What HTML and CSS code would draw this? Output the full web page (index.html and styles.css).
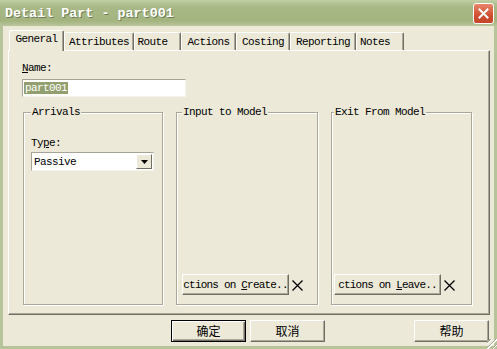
FILE: index.html
```html
<!DOCTYPE html>
<html lang="en">
  <head>
    <meta charset="UTF-8" />
    <title>Detail Part - part001</title>
    <link rel="stylesheet" href="styles.css">
  </head>
  <body>
    <div class="window">
      <div class="titlebar">
        <span class="title">Detail Part - part001</span>
        <span class="close">
          <svg width="11" height="11" viewBox="0 0 11 11"><path d="M1.5 1.5L9.5 9.5M9.5 1.5L1.5 9.5" stroke="#fff" stroke-width="2" stroke-linecap="square"/></svg>
        </span>
      </div>
      <div class="client">
        <div class="tabs">
          <span class="tab tab-general active">General</span>
          <span class="tab tab-attributes">Attributes</span>
          <span class="tab tab-route">Route</span>
          <span class="tab tab-actions">Actions</span>
          <span class="tab tab-costing">Costing</span>
          <span class="tab tab-reporting">Reporting</span>
          <span class="tab tab-notes">Notes</span>
        </div>
        <div class="panel">
          <div class="lbl"><u>N</u>ame:</div>
          <div class="textbox"><span class="sel">part001</span></div>
          <div class="groups">
            <fieldset class="group group-arrivals">
              <legend>Arrivals</legend>
              <div class="lbl type-lbl">Ty<u>p</u>e:</div>
              <div class="combo">
                <span class="combo-text">Passive</span>
                <span class="combo-btn">
                  <svg width="7" height="4" viewBox="0 0 7 4"><polygon points="0,0 7,0 3.5,4" fill="#000"/></svg>
                </span>
              </div>
            </fieldset>
            <fieldset class="group group-input">
              <legend>Input to Model</legend>
              <div class="action-row">
                <button class="btn action-btn">ctions on <u>C</u>reate..</button>
                <svg class="xmark" width="13" height="13" viewBox="0 0 13 13"><path d="M1.5 1.5L11.5 11.5M11.5 1.5L1.5 11.5" stroke="#000" stroke-width="1.3"/></svg>
              </div>
            </fieldset>
            <fieldset class="group group-exit">
              <legend>Exit From Model</legend>
              <div class="action-row">
                <button class="btn action-btn">ctions on <u>L</u>eave..</button>
                <svg class="xmark" width="13" height="13" viewBox="0 0 13 13"><path d="M1.5 1.5L11.5 11.5M11.5 1.5L1.5 11.5" stroke="#000" stroke-width="1.3"/></svg>
              </div>
            </fieldset>
          </div>
        </div>
        <div class="footer">
          <button class="btn cjk default">确定</button>
          <button class="btn cjk">取消</button>
          <button class="btn cjk help">帮助</button>
        </div>
        <span class="grip"></span>
      </div>
    </div>
  </body>
</html>
```

FILE: styles.css
```css
* {
  box-sizing: border-box;
}

body {
  margin: 0;
  background-color: #ece9d8;
  font-family: "Liberation Mono", "DejaVu Sans Mono", monospace;
  font-size: 11px;
  letter-spacing: -0.6px;
  color: #000;
}

.window {
  width: 497px;
  height: 349px;
  display: flex;
  flex-direction: column;
  background-color: #b7c49a;
}

/* Title bar */
.titlebar {
  height: 26px;
  display: flex;
  align-items: center;
  justify-content: space-between;
  padding: 0 3px 0 5px;
  background: linear-gradient(#c2cea4, #a9b986 25%, #a4b47f 80%, #b9c69c);
}

.title {
  font-size: 13.4px;
  font-weight: bold;
  letter-spacing: 0;
  color: #fff;
  text-shadow: 1px 1px 0 #6f7d52;
}

.close {
  width: 21px;
  height: 21px;
  display: flex;
  align-items: center;
  justify-content: center;
  border: 1px solid #fff;
  border-radius: 3px;
  background: linear-gradient(#e8866a, #cf4f30 60%, #c54528);
}

/* Client area */
.client {
  position: relative;
  flex: 1;
  margin: 0 3px 3px;
  background-color: #ece9d8;
  display: flex;
  flex-direction: column;
}

.tabs {
  height: 24px;
  display: flex;
  align-items: flex-end;
  padding-left: 6px;
}

.tab {
  height: 18px;
  display: flex;
  align-items: center;
  justify-content: center;
  border-top: 1px solid #fff;
  border-left: 1px solid #fff;
  border-right: 1px solid #716f64;
  border-radius: 2px 2px 0 0;
  box-shadow: inset -1px 0 0 #aca899;
  padding-top: 1px;
}

.tab.active {
  height: 21px;
  margin-bottom: -1px;
  position: relative;
  z-index: 1;
  background-color: #ece9d8;
  padding-top: 0;
  padding-bottom: 4px;
}

.tab-general { width: 55px; }
.tab-attributes { width: 70px; }
.tab-route { width: 47px; padding-right: 10px; }
.tab-actions { width: 55px; }
.tab-costing { width: 54px; }
.tab-reporting { width: 66px; }
.tab-notes { width: 48px; padding-right: 10px; }

.panel {
  margin-left: 5px;
  width: 482px;
  height: 265px;
  border-top: 1px solid #fff;
  border-left: 1px solid #fff;
  border-right: 1px solid #716f64;
  border-bottom: 1px solid #716f64;
  box-shadow: inset -1px -1px 0 #aca899;
  padding: 11px 0 0 13px;
}

.lbl {
  line-height: 12px;
}

.textbox {
  margin-top: 5px;
  width: 164px;
  height: 18px;
  background-color: #fff;
  border-top: 1px solid #a5a497;
  border-left: 1px solid #a5a497;
  border-right: 1px solid #f4f3ee;
  border-bottom: 1px solid #f4f3ee;
  padding: 2px 1px;
  line-height: 12px;
}

.sel {
  background-color: #939f6e;
  color: #fff;
  padding: 0 1px;
}

.groups {
  margin: 9px 0 0 1px;
  display: grid;
  grid-template-columns: 140px 142px 141px;
  column-gap: 13px;
}

.group {
  margin: 0;
  height: 199px;
  border: 1px solid #aca899;
  box-shadow: inset 1px 1px 0 #fff, 1px 1px 0 #fff;
  padding: 0 7px 9px;
  display: flex;
  flex-direction: column;
  justify-content: flex-end;
}

.group legend {
  padding: 0 1px;
  line-height: 12px;
  background-color: #ece9d8;
}

.group-arrivals {
  justify-content: flex-start;
}

.group-input {
  padding-left: 5px;
}

.group-exit {
  padding-left: 2px;
}

.type-lbl {
  margin-top: 19px;
}

.combo {
  margin-top: 3px;
  width: 123px;
  height: 19px;
  display: flex;
  align-items: center;
  justify-content: space-between;
  background-color: #fff;
  border-top: 1px solid #a5a497;
  border-left: 1px solid #a5a497;
  border-right: 1px solid #f4f3ee;
  border-bottom: 1px solid #f4f3ee;
  padding: 0 1px 0 2px;
}

.combo-btn {
  width: 16px;
  height: 15px;
  display: flex;
  align-items: center;
  justify-content: center;
  background-color: #ece9d8;
  border-top: 1px solid #fff;
  border-left: 1px solid #fff;
  border-right: 1px solid #716f64;
  border-bottom: 1px solid #716f64;
}

/* Buttons */
.btn {
  font-family: inherit;
  font-size: 11px;
  letter-spacing: -0.6px;
  color: #000;
  background-color: #ece9d8;
  border-top: 1px solid #fff;
  border-left: 1px solid #fff;
  border-right: 1px solid #716f64;
  border-bottom: 1px solid #716f64;
  box-shadow: inset -1px -1px 0 #aca899;
  padding: 0;
  margin: 0;
}

.action-row {
  display: flex;
  align-items: center;
}

.action-btn {
  width: 107px;
  height: 21px;
  white-space: nowrap;
  text-align: center;
  letter-spacing: -0.8px;
}

.xmark {
  margin: 2px 0 0 2px;
}

.footer {
  display: flex;
  padding: 5px 5px 0 168px;
  gap: 4px;
}

.cjk {
  font-family: "Noto Sans CJK SC", sans-serif;
  font-size: 12px;
  letter-spacing: 0;
  width: 75px;
  height: 22px;
  line-height: 18px;
}

.default {
  border-top-color: #000;
  border-left-color: #000;
  border-right-color: #000;
  border-bottom-color: #000;
  box-shadow: inset 1px 1px 0 #fff, inset -1px -1px 0 #716f64, inset -2px -2px 0 #aca899;
}

.help {
  margin-left: auto;
}

.grip {
  position: absolute;
  right: -3px;
  bottom: -3px;
  width: 10px;
  height: 10px;
  background: repeating-linear-gradient(135deg, transparent 0 2px, #aca899 2px 3px, #fff 3px 4px);
}
```
